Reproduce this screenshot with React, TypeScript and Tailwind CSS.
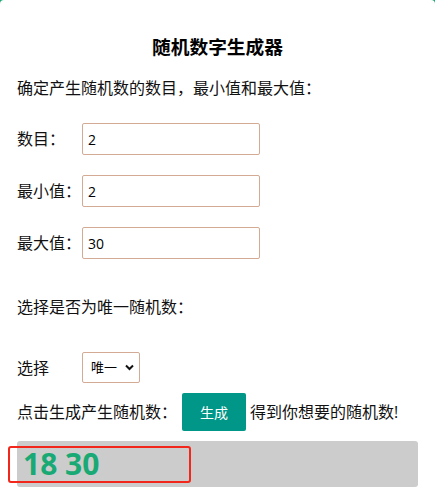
import React, { useState } from 'react';

const font = { fontFamily: '"Open Sans", "Noto Sans CJK SC", sans-serif' };

export default function App() {
  const [count, setCount] = useState('2');
  const [min, setMin] = useState('2');
  const [max, setMax] = useState('30');
  const [mode, setMode] = useState('unique');

  const inputCls =
    'w-[178px] h-[32px] px-[5px] text-[14px] text-black bg-white border border-[#d3ab95] rounded-[2px] outline-none';

  return (
    <div className="min-h-[503px] bg-[#19a974]" style={font}>
      <div className="min-h-[503px] bg-white rounded-t-[4px] pt-[33px] text-[16px] text-[#111]">
        <h3 className="text-center text-[18.72px] leading-[28px] font-bold text-black">随机数字生成器</h3>

        <div className="px-[17px]">
          <p className="mt-[15px] leading-[24px]">确定产生随机数的数目，最小值和最大值：</p>

          <div className="mt-[23px] flex flex-col gap-[20px]">
            <div className="flex items-center">
              <label className="w-[65px]">数目：</label>
              <input className={inputCls} value={count} onChange={(e) => setCount(e.target.value)} />
            </div>
            <div className="flex items-center">
              <label className="w-[65px]">最小值：</label>
              <input className={inputCls} value={min} onChange={(e) => setMin(e.target.value)} />
            </div>
            <div className="flex items-center">
              <label className="w-[65px]">最大值：</label>
              <input className={inputCls} value={max} onChange={(e) => setMax(e.target.value)} />
            </div>
          </div>

          <p className="mt-[36px] leading-[24px]">选择是否为唯一随机数：</p>

          <div className="mt-[33px] flex items-center">
            <label className="w-[65px]">选择</label>
            <div className="relative">
              <select
                value={mode}
                onChange={(e) => setMode(e.target.value)}
                className="appearance-none w-[58px] h-[31px] pl-[8px] text-[13px] text-black bg-white border border-[#d3ab95] rounded-[2px] outline-none"
              >
                <option value="unique">唯一</option>
                <option value="repeat">重复</option>
              </select>
              <svg
                className="absolute right-[6px] top-[12px] pointer-events-none"
                width="9"
                height="7"
                viewBox="0 0 9 7"
              >
                <path d="M1 1.5 L4.5 5 L8 1.5" fill="none" stroke="#111" strokeWidth="2" />
              </svg>
            </div>
          </div>

          <div className="mt-[10px] flex items-center">
            <span className="w-[165px]">点击生成产生随机数：</span>
            <button className="w-[64px] h-[38px] bg-[#009688] text-white text-[14px] rounded-[2px]">生成</button>
            <span className="ml-[4px]">得到你想要的随机数!</span>
          </div>

          <div className="relative mt-[10px] h-[46px] bg-[#cccccc] rounded-[3px] flex items-center pl-[6px]">
            <span className="text-[30px] font-bold text-[#19a974] leading-none">18 30</span>
            <div className="absolute left-[-9px] top-[5px] w-[183px] h-[37px] border-2 border-[#f2261a] rounded-[3px]" />
          </div>
        </div>
      </div>
    </div>
  );
}
